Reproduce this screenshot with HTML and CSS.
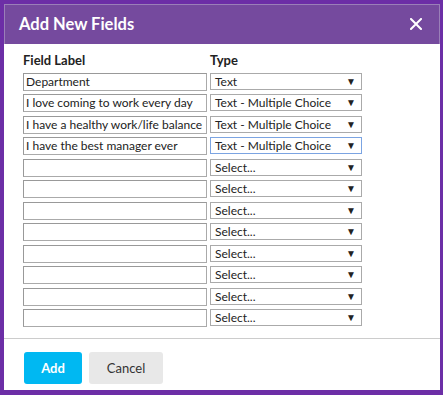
FILE: index.html
```html
<!DOCTYPE html>
<html>
<head>
<meta charset="utf-8">
<link rel="stylesheet" href="styles.css">
</head>
<body>
<div class="modal">
  <div class="modal-header">
    <span class="title">Add New Fields</span>
    <svg class="close" width="12" height="12" viewBox="0 0 12 12"><path d="M1 1L11 11M11 1L1 11" stroke="#fff" stroke-width="2" stroke-linecap="square"/></svg>
  </div>
  <div class="modal-body">
    <div class="grid">
      <div class="col-head">Field Label</div>
      <div class="col-head">Type</div>

      <div class="input">Department</div>
      <div class="select"><span>Text</span><span class="arrow">▼</span></div>

      <div class="input">I love coming to work every day</div>
      <div class="select"><span>Text - Multiple Choice</span><span class="arrow">▼</span></div>

      <div class="input">I have a healthy work/life balance</div>
      <div class="select"><span>Text - Multiple Choice</span><span class="arrow">▼</span></div>

      <div class="input">I have the best manager ever</div>
      <div class="select focus"><span>Text - Multiple Choice</span><span class="arrow">▼</span></div>

      <div class="input"></div>
      <div class="select"><span>Select...</span><span class="arrow">▼</span></div>
      <div class="input"></div>
      <div class="select"><span>Select...</span><span class="arrow">▼</span></div>
      <div class="input"></div>
      <div class="select"><span>Select...</span><span class="arrow">▼</span></div>
      <div class="input"></div>
      <div class="select"><span>Select...</span><span class="arrow">▼</span></div>
      <div class="input"></div>
      <div class="select"><span>Select...</span><span class="arrow">▼</span></div>
      <div class="input"></div>
      <div class="select"><span>Select...</span><span class="arrow">▼</span></div>
      <div class="input"></div>
      <div class="select"><span>Select...</span><span class="arrow">▼</span></div>
      <div class="input"></div>
      <div class="select"><span>Select...</span><span class="arrow">▼</span></div>
    </div>
  </div>
  <div class="modal-footer">
    <button class="btn btn-primary">Add</button>
    <button class="btn btn-default">Cancel</button>
  </div>
</div>
</body>
</html>
```
FILE: styles.css
```css
html, body {
  margin: 0;
  padding: 0;
  background: #6c2ea6;
  width: 443px;
  height: 395px;
  overflow: hidden;
  font-family: Lato, "Open Sans", sans-serif;
}
.modal {
  margin: 4px 0 0 4px;
  width: 436px;
  height: 386px;
  background: #fff;
  box-sizing: border-box;
  display: flex;
  flex-direction: column;
}
.modal-header {
  height: 40px;
  flex: none;
  background: #754a9e;
  border: 1px solid #9a7fb8;
  border-bottom: none;
  box-sizing: border-box;
  display: flex;
  align-items: center;
  justify-content: space-between;
  padding: 0 17px 1px 14px;
}
.title {
  color: #fff;
  font-weight: 700;
  font-size: 16.5px;
}
.close { display: block; }
.modal-body {
  flex: 1;
  padding: 7px 0 0 19px;
}
.grid {
  display: grid;
  grid-template-columns: 184px 152px;
  column-gap: 3px;
  grid-auto-rows: 18px;
  row-gap: 3.5px;
}
.col-head {
  font-weight: 700;
  font-size: 13px;
  color: #222;
  line-height: 18px;
}
.input {
  border: 1px solid #aaa;
  border-top-color: #999;
  border-left-color: #999;
  box-sizing: border-box;
  height: 18px;
  font-size: 12px;
  line-height: 16px;
  padding-left: 2px;
  color: #222;
  white-space: nowrap;
  overflow: hidden;
}
.select {
  border: 1px solid #aaa;
  box-sizing: border-box;
  height: 17px;
  font-size: 12px;
  line-height: 15px;
  padding: 0 5px 0 4px;
  color: #222;
  display: flex;
  justify-content: space-between;
  align-items: center;
  white-space: nowrap;
}
.select.focus {
  border-color: #7ba4e2;
}
.arrow {
  font-size: 10px;
  color: #222;
}
.modal-footer {
  height: 52px;
  flex: none;
  border-top: 1px solid #ccc;
  box-sizing: border-box;
  padding: 13px 0 0 20px;
  display: flex;
  gap: 7px;
  align-items: flex-start;
}
.btn {
  height: 32px;
  border: none;
  border-radius: 3px;
  font-family: Lato, "Open Sans", sans-serif;
  font-size: 13px;
  padding: 0;
}
.btn-primary {
  width: 58px;
  background: #00b8f2;
  color: #fff;
  font-weight: 700;
}
.btn-default {
  width: 74px;
  background: #e8e8e8;
  color: #333;
}
```
